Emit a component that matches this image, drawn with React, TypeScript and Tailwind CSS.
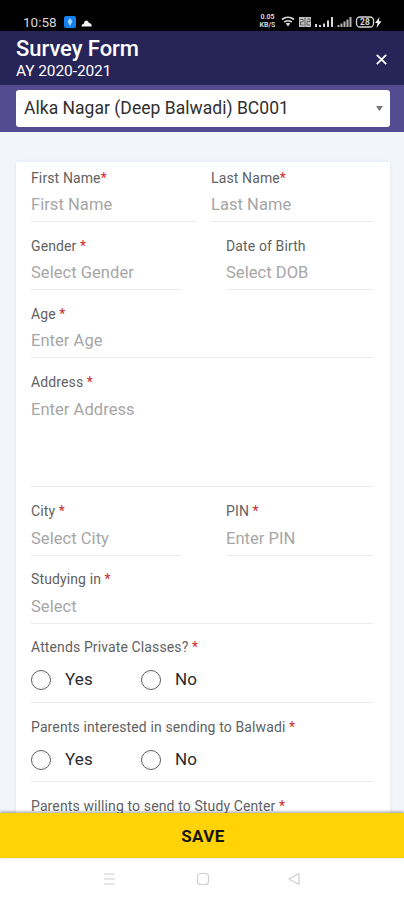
import { useState } from "react";
import clsx from "clsx";

interface FieldProps {
    label: string;
    placeholder: string;
    required?: boolean;
    tight?: boolean;
    className?: string;
    lineClassName?: string;
}

function Label({ text, required = true, tight = false }: { text: string; required?: boolean; tight?: boolean }) {
    return (
        <p className="h-5 whitespace-nowrap text-[14px] leading-5 tracking-[0.12px] text-[#626262]">
            {text}
            {required && (
                <span className={clsx("text-[#cf2a2e]", !tight && "ml-[3.5px]")}>*</span>
            )}
        </p>
    );
}

function Field({ label, placeholder, required = true, tight, className, lineClassName }: FieldProps) {
    return (
        <div className={className}>
            <Label text={label} required={required} tight={tight} />
            <div className={clsx("border-b border-[#ebebeb]", lineClassName || "h-[34px] pt-[5px]")}>
                <input
                    placeholder={placeholder}
                    className="block h-6 w-full bg-transparent text-[16.5px] leading-6 tracking-[0.05px] outline-none placeholder:text-[#a6a6a6]"
                />
            </div>
        </div>
    );
}

function YesNo({ label, className }: { label: string; className?: string }) {
    const [value, setValue] = useState("");

    return (
        <div className={clsx("border-b border-[#ebebeb]", className)}>
            <Label text={label} />
            <div className="mt-3 flex h-[22px] items-center">
                {["Yes", "No"].map((option) => (
                    <button
                        key={option}
                        onClick={() => setValue(option)}
                        className="flex w-[110px] items-center gap-[14px] text-[17px] tracking-[0.2px] text-[#2b2b2b]"
                    >
                        <span className="flex size-[20px] items-center justify-center rounded-full border-[1.5px] border-[#5c5c5c]">
                            {value === option && <span className="size-2.5 rounded-full bg-[#5c5c5c]" />}
                        </span>
                        {option}
                    </button>
                ))}
            </div>
        </div>
    );
}

function StatusBar() {
    return (
        <div className="flex h-[31px] shrink-0 items-start bg-black pl-[23px] pt-[13px] text-[#d6d6d6]">
            <span className="w-[41px] text-[13.5px] leading-[18px]">10:58</span>
            <svg className="mt-[3px]" width="30" height="12" viewBox="0 0 30 12">
                <rect x="0" y="0" width="12" height="12" rx="2" fill="#1681ee" />
                <path d="M6 2l2.5 3.5L6 10 3.5 5.5z" fill="#9fd3ff" />
                <path d="M17.5 10.500c0-1.800 1.300-2.800 2.300-2.800.7-4.300 4.200-4.300 5.200-.7 1.700 0 2.800 1.500 2.800 3.500z" fill="#f4f4f4" />
            </svg>
            <div className="ml-auto mr-[20px] flex items-center">
                <div className="mr-[5px] w-[17px] text-center text-[7px] font-bold leading-[8px]">
                    <p>0.05</p>
                    <p>KB/S</p>
                </div>
                <svg className="mt-[1px]" width="103" height="14" viewBox="0 0 103 14" fill="none">
                    {/* wifi */}
                    <path d="M1 4.500Q7 0 13 4.500M3.200 7Q7 4.500 10.800 7" stroke="currentColor" strokeWidth="1.700" />
                    <path d="M4.800 8.500Q7 7 9.200 8.500L7 11.500z" fill="currentColor" />
                    {/* volte */}
                    <rect x="18" y="2" width="12" height="10" fill="#c2c2c2" />
                    <path d="M19 4.500h3v2.500h-2.500v3h3M24 2.500v9M26 4h3v2.500h-3v3.500h3" stroke="#333" strokeWidth="0.700" />
                    {/* signals */}
                    <path d="M35 9v3M39 10v2M43 8.500v3.500M47 5.500v6.500M51 2v10" stroke="currentColor" strokeWidth="2" />
                    <path d="M57.500 10v2M60.500 8.500v3.500M63.500 6.500v5.500M66.500 4.500v7.500M69.500 2v10" stroke="#b5b5b5" strokeWidth="2" />
                    {/* battery */}
                    <rect x="75.500" y="2" width="17" height="10" rx="3.500" stroke="currentColor" strokeWidth="1.300" />
                    <text x="84" y="10" fill="currentColor" fontSize="8.500" fontWeight="700" textAnchor="middle">28</text>
                    <path d="M98.500 2l-4.500 6h2.500l-1 5 5-6.800h-2.600z" fill="#f4f4f4" />
                </svg>
            </div>
        </div>
    );
}

export default function App() {
    return (
        <div className="flex h-[900px] w-[404px] flex-col overflow-hidden bg-[#f2f6fa] font-[Roboto,sans-serif]">
            <StatusBar />

            {/* Header */}
            <header className="flex h-[54px] shrink-0 items-start justify-between bg-[#272458] pl-4 pr-[16px] text-white">
                <div>
                    <h1 className="mt-[6px] text-[22px] font-medium leading-6 tracking-[-0.05px]">Survey Form</h1>
                    <p className="text-[15.5px] leading-5 tracking-[-0.1px]">AY 2020-2021</p>
                </div>
                <button aria-label="Close" className="mt-[22px]">
                    <svg width="13" height="13" viewBox="0 0 13 13" stroke="#fff" strokeWidth="1.800">
                        <path d="M1.800 1.800l9.400 9.400M11.200 1.800l-9.400 9.400" />
                    </svg>
                </button>
            </header>
            <div className="h-[47px] shrink-0 bg-[#554b91] pl-4 pr-[14px] pt-[5px]">
                <button className="flex h-[37px] w-full items-center justify-between rounded-[3px] bg-white pl-2 pr-[7px] text-[17.5px] tracking-[0.03px] text-[#303030]">
                    Alka Nagar (Deep Balwadi) BC001
                    <svg width="7" height="5" viewBox="0 0 7 5" fill="#777">
                        <path d="M0 0h7L3.500 5z" />
                    </svg>
                </button>
            </div>

            {/* Form */}
            <main className="min-h-0 flex-1 overflow-hidden pl-4 pr-[14px] pt-[30px]">
                <div className="h-[700px] bg-white pl-[15px] pr-[17px] pt-1.5 shadow-[0_0_4px_rgba(0,0,0,0.08)]">
                    <div className="flex justify-between">
                        <Field label="First Name" placeholder="First Name" tight className="w-[165px]" />
                        <Field label="Last Name" placeholder="Last Name" tight className="w-[162px]" />
                    </div>
                    <div className="flex justify-between pt-3.5">
                        <Field label="Gender" placeholder="Select Gender" className="w-[150px]" />
                        <Field label="Date of Birth" placeholder="Select DOB" required={false} className="w-[147px]" />
                    </div>
                    <Field label="Age" placeholder="Enter Age" className="pt-3.5" />
                    <Field label="Address" placeholder="Enter Address" className="pt-3.5" lineClassName="h-[95px] pt-[6px]" />
                    <div className="flex justify-between pt-3.5">
                        <Field label="City" placeholder="Select City" className="w-[150px]" lineClassName="h-[35px] pt-[6px]" />
                        <Field label="PIN" placeholder="Enter PIN" className="w-[147px]" lineClassName="h-[35px] pt-[6px]" />
                    </div>
                    <Field label="Studying in" placeholder="Select" className="pt-[13px]" lineClassName="h-[35px] pt-[6px]" />
                    <YesNo label="Attends Private Classes?" className="h-[79px] pt-[13px]" />
                    <YesNo label="Parents interested in sending to Balwadi" className="h-[79px] pt-3.5" />
                    <div className="pt-3.5">
                        <Label text="Parents willing to send to Study Center" />
                    </div>
                </div>
            </main>

            <button className="relative h-[45px] shrink-0 bg-[#ffd305] pl-0.5 pt-0.5 text-[17px] font-bold tracking-[0.4px] text-[#161616] shadow-[0_-1px_3px_rgba(0,0,0,0.4)]">
                SAVE
            </button>

            {/* Android navigation */}
            <nav className="flex h-[42px] shrink-0 items-center justify-center bg-white">
                <svg width="200" height="16" viewBox="0 0 200 16" fill="none" stroke="#cfcfcf" strokeWidth="1.200">
                    <path d="M2 3h11M2 8h11M2 13h11" />
                    <rect x="95.500" y="2.500" width="11" height="11" rx="3" />
                    <path d="M197 2.500v11L187 8z" strokeLinejoin="round" />
                </svg>
            </nav>
        </div>
    );
}
